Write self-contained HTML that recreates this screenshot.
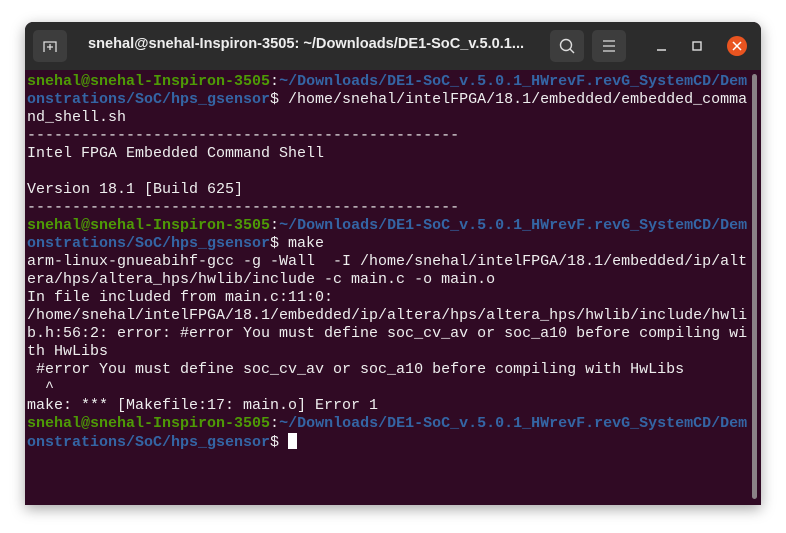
<!DOCTYPE html>
<html><head><style>
html,body{margin:0;padding:0;background:#fff;width:786px;height:533px;overflow:hidden}
.win{position:absolute;left:25px;top:22px;width:736px;height:483px;border-radius:8px 8px 0 0;overflow:hidden;box-shadow:0 4px 14px rgba(0,0,0,.35);background:#300a24}
.tb{position:absolute;left:0;top:0;width:736px;height:48px;background:#2c2c2c}
.btn{position:absolute;top:8px;width:34px;height:32px;border-radius:5px;background:#3d3d3d}
.title{position:absolute;left:63px;top:14px;font:bold 14.6px "Liberation Sans",sans-serif;color:#eee;white-space:nowrap}
.term{position:absolute;left:2px;top:51px;font:15px/18px "Liberation Mono",monospace;color:#eee;white-space:pre;letter-spacing:0}
.g{color:#4e9a06;font-weight:bold}.b{color:#3465a4;font-weight:bold}
.sb{position:absolute;left:727px;top:52px;width:5px;height:425px;border-radius:3px;background:#8a8286}
.cur{display:inline-block;width:9px;height:16px;background:#fff;vertical-align:-3px}
</style></head><body>
<div class="win">
<div class="tb">
 <div class="btn" style="left:8px"><svg width="34" height="32"><path d="M11 22V12h12v10M14 17h6M17 14v6" stroke="#ddd" stroke-width="1.3" fill="none"/></svg></div>
 <div class="title">snehal@snehal-Inspiron-3505: ~/Downloads/DE1-SoC_v.5.0.1...</div>
 <div class="btn" style="left:525px"><svg width="34" height="32"><circle cx="16" cy="15" r="5.5" stroke="#ddd" stroke-width="1.4" fill="none"/><path d="M20 19l4 4" stroke="#ddd" stroke-width="1.4"/></svg></div>
 <div class="btn" style="left:567px"><svg width="34" height="32"><path d="M11 11h12M11 16h12M11 21h12" stroke="#ddd" stroke-width="1.3"/></svg></div>
 <svg style="position:absolute;left:620px;top:10px" width="110" height="28"><path d="M12 18h9" stroke="#ddd" stroke-width="1.4"/><rect x="48" y="10" width="8" height="8" stroke="#ddd" stroke-width="1.4" fill="none"/><circle cx="92" cy="14" r="10" fill="#e95420"/><path d="M88 10l8 8M96 10l-8 8" stroke="#fff" stroke-width="1.5"/></svg>
</div>
<div class="term"><span class="g">snehal@snehal-Inspiron-3505</span>:<span class="b">~/Downloads/DE1-SoC_v.5.0.1_HWrevF.revG_SystemCD/Dem
onstrations/SoC/hps_gsensor</span>$ /home/snehal/intelFPGA/18.1/embedded/embedded_comma
nd_shell.sh
------------------------------------------------
Intel FPGA Embedded Command Shell

Version 18.1 [Build 625]
------------------------------------------------
<span class="g">snehal@snehal-Inspiron-3505</span>:<span class="b">~/Downloads/DE1-SoC_v.5.0.1_HWrevF.revG_SystemCD/Dem
onstrations/SoC/hps_gsensor</span>$ make
arm-linux-gnueabihf-gcc -g -Wall  -I /home/snehal/intelFPGA/18.1/embedded/ip/alt
era/hps/altera_hps/hwlib/include -c main.c -o main.o
In file included from main.c:11:0:
/home/snehal/intelFPGA/18.1/embedded/ip/altera/hps/altera_hps/hwlib/include/hwli
b.h:56:2: error: #error You must define soc_cv_av or soc_a10 before compiling wi
th HwLibs
 #error You must define soc_cv_av or soc_a10 before compiling with HwLibs
  ^
make: *** [Makefile:17: main.o] Error 1
<span class="g">snehal@snehal-Inspiron-3505</span>:<span class="b">~/Downloads/DE1-SoC_v.5.0.1_HWrevF.revG_SystemCD/Dem
onstrations/SoC/hps_gsensor</span>$ <span class="cur"></span></div>
<div class="sb"></div>
</div>
</body></html>
